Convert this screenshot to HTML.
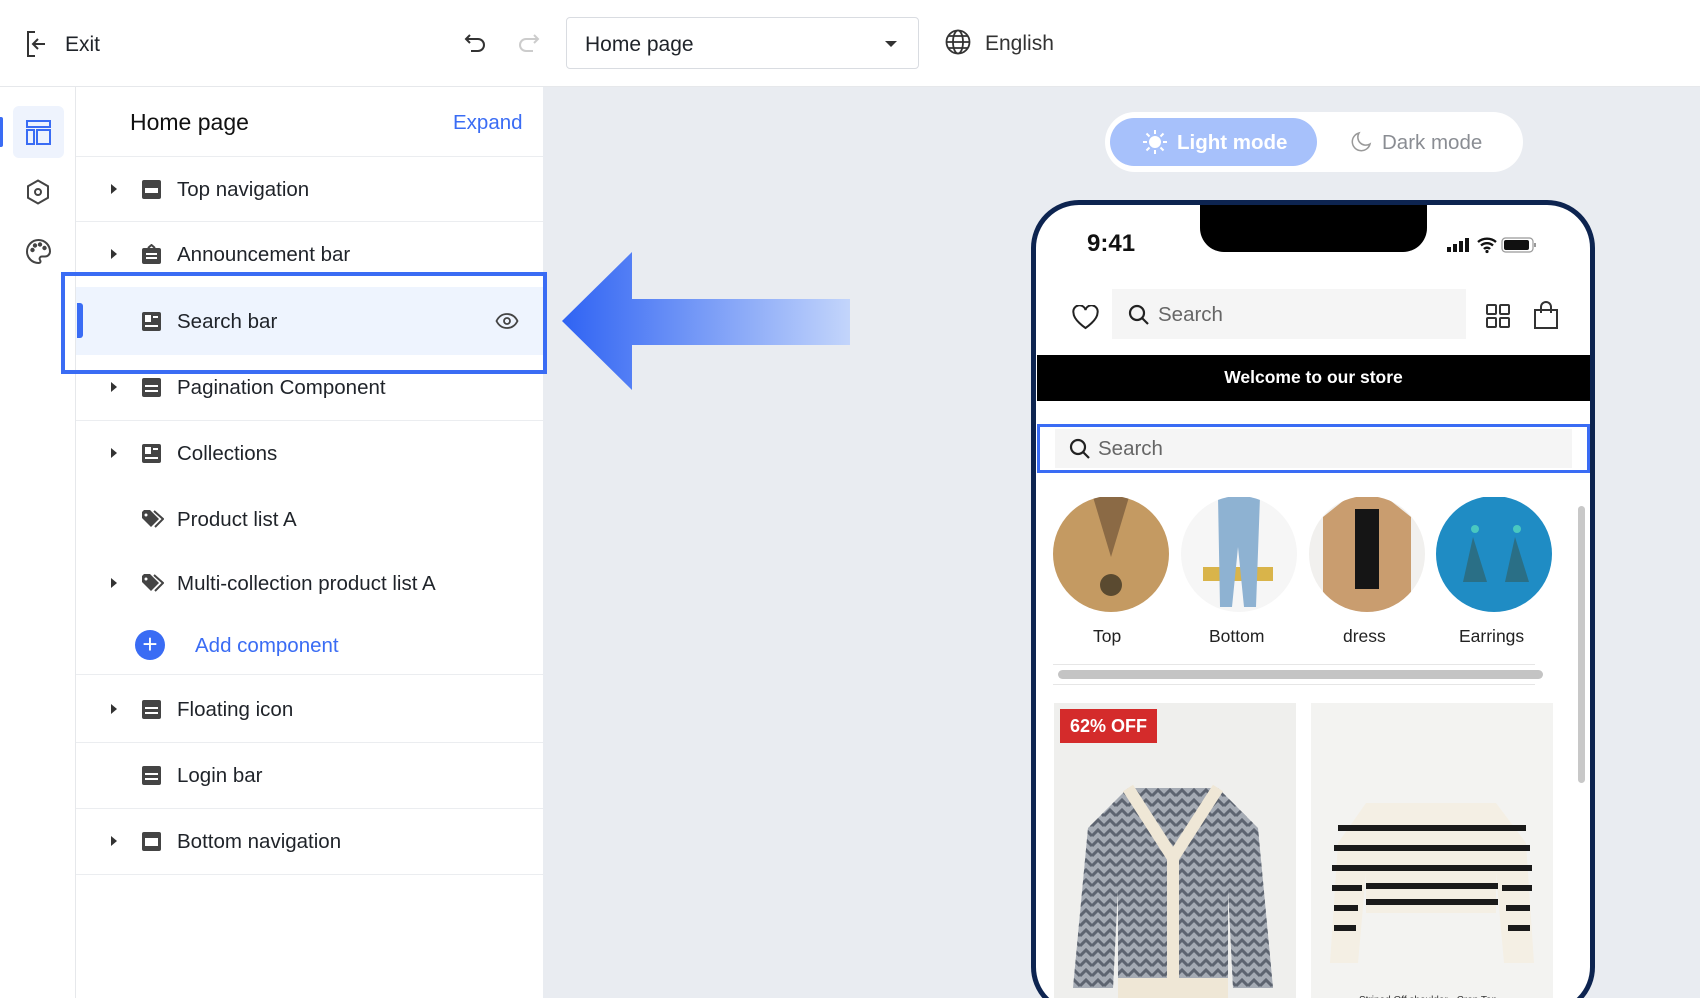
<!DOCTYPE html>
<html style="overflow:hidden;width:1700px;height:998px"><head><meta charset="utf-8">
<style>
*{margin:0;padding:0;box-sizing:border-box}
body{width:1700px;height:998px;overflow:hidden;background:#fff;font-family:"Liberation Sans",Arial,sans-serif;color:#1f2329;position:relative}
.abs{position:absolute}
.row{position:absolute;left:76px;width:467px;height:0}
.row .t{position:absolute;left:101px;top:-11px;font-size:20.5px;white-space:nowrap;color:#1f2329}
.row .tri{position:absolute;left:35px;top:-5px;width:0;height:0;border-left:6px solid #333;border-top:5px solid transparent;border-bottom:5px solid transparent}
.row svg{position:absolute;left:65px;top:-10px}
.div{position:absolute;left:76px;width:467px;height:1px;background:#ebedf0}
</style></head><body>
<!-- top bar -->
<div class="abs" style="left:0;top:86px;width:1700px;height:1px;background:#e6e8eb"></div>
<svg class="abs" style="left:25px;top:30px" width="26" height="28" viewBox="0 0 26 28" fill="none" stroke="#333" stroke-width="2"><path d="M10 2H3v24h7"/><path d="M20 14H8M13 9l-5 5 5 5"/></svg>
<div class="abs" style="left:65px;top:33px;font-size:21px">Exit</div>
<svg class="abs" style="left:464px;top:32px" width="24" height="22" viewBox="0 0 24 22" fill="none" stroke="#333" stroke-width="2"><path d="M6 3L2 7l4 4"/><path d="M2 7h12a6 6 0 010 12H7"/></svg>
<svg class="abs" style="left:516px;top:32px" width="24" height="22" viewBox="0 0 24 22" fill="none" stroke="#ccc" stroke-width="2"><path d="M18 3l4 4-4 4"/><path d="M22 7H10a6 6 0 000 12h7"/></svg>
<div class="abs" style="left:566px;top:17px;width:353px;height:52px;border:1px solid #d9dce1;border-radius:4px"></div>
<div class="abs" style="left:585px;top:33px;font-size:21px;color:#1f2329">Home page</div>
<div class="abs" style="left:885px;top:41px;border-top:6px solid #333;border-left:6px solid transparent;border-right:6px solid transparent"></div>
<svg class="abs" style="left:945px;top:29px" width="26" height="26" viewBox="0 0 26 26" fill="none" stroke="#333" stroke-width="1.8"><circle cx="13" cy="13" r="11.5"/><ellipse cx="13" cy="13" rx="5" ry="11.5"/><path d="M1.5 13h23M3.5 7h19M3.5 19h19"/></svg>
<div class="abs" style="left:985px;top:32px;font-size:21px;color:#333">English</div>

<!-- left rail -->
<div class="abs" style="left:75px;top:87px;width:1px;height:911px;background:#e6e8eb"></div>
<div class="abs" style="left:0;top:117px;width:3px;height:30px;background:#3a6cf4;border-radius:0 2px 2px 0"></div>
<div class="abs" style="left:13px;top:106px;width:51px;height:52px;background:#eef3fd;border-radius:6px"></div>
<svg class="abs" style="left:26px;top:120px" width="25" height="25" viewBox="0 0 25 25" fill="none" stroke="#3a6cf4" stroke-width="2"><rect x="1" y="1" width="23" height="6"/><rect x="1" y="10" width="7" height="14"/><rect x="11" y="10" width="13" height="14"/></svg>
<svg class="abs" style="left:26px;top:179px" width="24" height="26" viewBox="0 0 24 26" fill="none" stroke="#444" stroke-width="2"><path d="M12 1.5l10 5.75v11.5L12 24.5 2 18.75V7.25z"/><circle cx="12" cy="13" r="3"/></svg>
<svg class="abs" style="left:25px;top:238px" width="27" height="27" viewBox="0 0 27 27" fill="none" stroke="#444" stroke-width="2"><path d="M13.5 2A11.5 11.5 0 002 13.5 11.5 11.5 0 0013.5 25c2 0 2.5-1.5 1.5-3-1-1.5 0-3.5 2-3.5h3c2.5 0 5-2 5-5A11.5 11.5 0 0013.5 2z"/><circle cx="7.5" cy="12" r="1.2" fill="#444"/><circle cx="10" cy="7.5" r="1.2" fill="#444"/><circle cx="15" cy="6.5" r="1.2" fill="#444"/><circle cx="19.5" cy="10" r="1.2" fill="#444"/></svg>

<!-- panel -->
<div class="abs" style="left:543px;top:87px;width:1157px;height:911px;background:#e9ecf1"></div>
<div class="abs" style="left:130px;top:109px;font-size:23px;color:#111">Home page</div>
<div class="abs" style="left:453px;top:111px;font-size:20.5px;color:#3a6cf4">Expand</div>
<div class="div" style="top:156px"></div>
<div class="div" style="top:221px"></div>
<div class="abs" style="left:76px;top:287px;width:467px;height:68px;background:#eef4fe"></div>
<div class="abs" style="left:77px;top:303px;width:6px;height:35px;background:#3a6cf4;border-radius:0 3px 3px 0"></div>
<div class="div" style="top:420px"></div>
<div class="div" style="top:674px"></div>
<div class="div" style="top:742px"></div>
<div class="div" style="top:808px"></div>
<div class="div" style="top:874px"></div>

<div class="row" style="top:189px"><div class="tri"></div><svg width="21" height="21" viewBox="0 0 21 21"><rect x="1" y="1" width="19" height="19" rx="2" fill="#444"/><rect x="4" y="9" width="13" height="5" fill="#fff"/></svg><div class="t">Top navigation</div></div>
<div class="row" style="top:254px"><div class="tri"></div><svg width="21" height="21" viewBox="0 0 21 21"><rect x="1" y="4" width="19" height="16" rx="2" fill="#444"/><path d="M7 4l3.5-3 3.5 3" stroke="#444" stroke-width="2" fill="none"/><rect x="5" y="9" width="11" height="2" fill="#fff"/><rect x="5" y="13" width="11" height="2" fill="#fff"/></svg><div class="t">Announcement bar</div></div>
<div class="row" style="top:321px"><svg width="21" height="21" viewBox="0 0 21 21"><rect x="1" y="1" width="19" height="19" rx="2" fill="#444"/><rect x="4" y="4" width="6" height="7" fill="#fff"/><rect x="12" y="5" width="5" height="2" fill="#fff"/><rect x="4" y="14" width="13" height="2" fill="#fff"/></svg><div class="t">Search bar</div>
<svg style="left:419px;top:-9px" width="24" height="18" viewBox="0 0 24 18" fill="none" stroke="#444" stroke-width="1.8"><path d="M1.5 9C4 4 8 2 12 2s8 2 10.5 7c-2.5 5-6.5 7-10.5 7S4 14 1.5 9z"/><circle cx="12" cy="9" r="3"/></svg></div>
<div class="row" style="top:387px"><div class="tri"></div><svg width="21" height="21" viewBox="0 0 21 21"><rect x="1" y="1" width="19" height="19" rx="2" fill="#444"/><rect x="4" y="8" width="13" height="2" fill="#fff"/><rect x="4" y="13" width="13" height="2" fill="#fff"/></svg><div class="t">Pagination Component</div></div>
<div class="row" style="top:453px"><div class="tri"></div><svg width="21" height="21" viewBox="0 0 21 21"><rect x="1" y="1" width="19" height="19" rx="2" fill="#444"/><rect x="4" y="4" width="6" height="7" fill="#fff"/><rect x="12" y="5" width="5" height="2" fill="#fff"/><rect x="4" y="14" width="13" height="2" fill="#fff"/></svg><div class="t">Collections</div></div>
<div class="row" style="top:519px"><svg width="23" height="21" viewBox="0 0 23 21"><path d="M1 3v6l9 9 8-8-9-9H3z" fill="#444"/><path d="M13 2l9 8-8 8" stroke="#444" stroke-width="2" fill="none"/><circle cx="5" cy="6" r="1.5" fill="#fff"/></svg><div class="t">Product list A</div></div>
<div class="row" style="top:583px"><div class="tri"></div><svg width="23" height="21" viewBox="0 0 23 21"><path d="M1 3v6l9 9 8-8-9-9H3z" fill="#444"/><path d="M13 2l9 8-8 8" stroke="#444" stroke-width="2" fill="none"/><circle cx="5" cy="6" r="1.5" fill="#fff"/></svg><div class="t">Multi-collection product list A</div></div>
<div class="abs" style="left:135px;top:630px;width:30px;height:30px;border-radius:50%;background:#3a6cf4;color:#fff;font-size:26px;line-height:28px;text-align:center">+</div>
<div class="abs" style="left:195px;top:634px;font-size:20.5px;color:#3a6cf4">Add component</div>
<div class="row" style="top:709px"><div class="tri"></div><svg width="21" height="21" viewBox="0 0 21 21"><rect x="1" y="1" width="19" height="19" rx="2" fill="#444"/><rect x="4" y="8" width="13" height="2" fill="#fff"/><rect x="4" y="13" width="13" height="2" fill="#fff"/></svg><div class="t">Floating icon</div></div>
<div class="row" style="top:775px"><svg width="21" height="21" viewBox="0 0 21 21"><rect x="1" y="1" width="19" height="19" rx="2" fill="#444"/><rect x="4" y="8" width="13" height="2" fill="#fff"/><rect x="4" y="13" width="13" height="2" fill="#fff"/></svg><div class="t">Login bar</div></div>
<div class="row" style="top:841px"><div class="tri"></div><svg width="21" height="21" viewBox="0 0 21 21"><rect x="1" y="1" width="19" height="19" rx="2" fill="#444"/><rect x="4" y="7" width="13" height="8" fill="#fff"/></svg><div class="t">Bottom navigation</div></div>

<!-- highlight box -->
<div class="abs" style="left:61px;top:272px;width:486px;height:102px;border:4px solid #3a6cf4"></div>

<!-- arrow -->
<svg class="abs" style="left:560px;top:250px" width="292" height="142" viewBox="0 0 292 142"><defs><linearGradient id="g" x1="0" x2="1"><stop offset="0" stop-color="#2f63f3"/><stop offset="1" stop-color="#c3d5fb"/></linearGradient></defs><path d="M2 71L72 2v47h218v46H72v45z" fill="url(#g)"/></svg>

<!-- mode toggle -->
<div class="abs" style="left:1105px;top:112px;width:418px;height:60px;border-radius:30px;background:#fff"></div>
<div class="abs" style="left:1110px;top:118px;width:207px;height:48px;border-radius:24px;background:#a7c1fb"></div>
<svg class="abs" style="left:1142px;top:129px" width="26" height="26" viewBox="0 0 26 26" stroke="#fff" stroke-width="2"><circle cx="13" cy="13" r="5" fill="#fff"/><path d="M13 1v4M13 21v4M1 13h4M21 13h4M4.5 4.5l3 3M18.5 18.5l3 3M4.5 21.5l3-3M18.5 7.5l3-3"/></svg>
<div class="abs" style="left:1177px;top:131px;font-size:20.5px;color:#fff;font-weight:bold">Light mode</div>
<svg class="abs" style="left:1350px;top:131px" width="22" height="22" viewBox="0 0 22 22" fill="none" stroke="#999" stroke-width="1.5"><path d="M9 2a9 9 0 1011 11A8 8 0 019 2z"/></svg>
<div class="abs" style="left:1382px;top:131px;font-size:20.5px;color:#8a8d93">Dark mode</div>

<!-- phone -->
<div class="abs" style="left:1031px;top:200px;width:564px;height:815px;border:5px solid #0d2450;border-radius:48px;background:#fff;overflow:hidden">
 <div class="abs" style="left:164px;top:-5px;width:227px;height:52px;background:#000;border-radius:0 0 24px 24px"></div>
 <div class="abs" style="left:51px;top:25px;font-size:24px;font-weight:bold;color:#111">9:41</div>
 <svg class="abs" style="left:411px;top:31px" width="90" height="18" viewBox="0 0 90 18"><rect x="0" y="11" width="4" height="5" fill="#111"/><rect x="6" y="8" width="4" height="8" fill="#111"/><rect x="12" y="5" width="4" height="11" fill="#111"/><rect x="18" y="2" width="4" height="14" fill="#111"/><path d="M31 6a14 14 0 0118 0M34 9.5a9 9 0 0112 0M37 13a4 4 0 016 0" stroke="#111" stroke-width="2.4" fill="none"/><circle cx="40" cy="15.5" r="1.6" fill="#111"/><rect x="55" y="2" width="31" height="14" rx="3.5" stroke="#999" stroke-width="1.2" fill="none"/><rect x="57" y="4" width="25" height="10" rx="2" fill="#111"/><rect x="87" y="7" width="2" height="4" fill="#999"/></svg>
 <svg class="abs" style="left:36px;top:100px" width="27" height="25" viewBox="0 0 27 25" fill="none" stroke="#222" stroke-width="2"><path d="M13.5 23S1.5 15 1.5 8A6 6 0 0113.5 5a6 6 0 0112 3c0 7-12 15-12 15z"/></svg>
 <div class="abs" style="left:76px;top:84px;width:354px;height:50px;background:#f5f5f5"></div>
 <svg class="abs" style="left:92px;top:99px" width="22" height="22" viewBox="0 0 22 22" fill="none" stroke="#222" stroke-width="2.2"><circle cx="9" cy="9" r="7"/><path d="M14 14l6 6"/></svg>
 <div class="abs" style="left:122px;top:98px;font-size:20.5px;color:#666">Search</div>
 <svg class="abs" style="left:450px;top:99px" width="24" height="24" viewBox="0 0 24 24" fill="none" stroke="#333" stroke-width="2"><rect x="1" y="1" width="9" height="9" rx="1"/><rect x="14" y="1" width="9" height="9" rx="1"/><rect x="1" y="14" width="9" height="9" rx="1"/><rect x="14" y="14" width="9" height="9" rx="1"/></svg>
 <svg class="abs" style="left:497px;top:96px" width="26" height="28" viewBox="0 0 26 28" fill="none" stroke="#333" stroke-width="2"><path d="M2 9h22v18H2z"/><path d="M8 12V6a5 5 0 0110 0v6"/></svg>
 <div class="abs" style="left:1px;top:150px;width:553px;height:46px;background:#000;color:#fff;font-size:17.5px;text-align:center;line-height:44px;font-weight:bold">Welcome to our store</div>
 <div class="abs" style="left:1px;top:219px;width:553px;height:49px;border:3px solid #3a6cf4;background:#fff"></div>
 <div class="abs" style="left:19px;top:224px;width:517px;height:39px;background:#f5f5f5"></div>
 <svg class="abs" style="left:33px;top:233px" width="22" height="22" viewBox="0 0 22 22" fill="none" stroke="#222" stroke-width="2.2"><circle cx="9" cy="9" r="7"/><path d="M14 14l6 6"/></svg>
 <div class="abs" style="left:62px;top:232px;font-size:20.5px;color:#666">Search</div>
 <!-- categories -->
 <svg class="abs" style="left:17px;top:292px" width="520" height="125" viewBox="0 0 520 125">
  <defs><clipPath id="c1"><circle cx="58" cy="57" r="58"/></clipPath><clipPath id="c2"><circle cx="186" cy="57" r="58"/></clipPath><clipPath id="c3"><circle cx="314" cy="57" r="58"/></clipPath><clipPath id="c4"><circle cx="441" cy="57" r="58"/></clipPath></defs>
  <circle cx="58" cy="57" r="58" fill="#c49a62"/><g clip-path="url(#c1)"><path d="M40 0l18 60 18-60z" fill="#8b6a45"/><circle cx="58" cy="88" r="11" fill="#5a4a30"/></g>
  <circle cx="186" cy="57" r="58" fill="#f6f6f6"/><g clip-path="url(#c2)"><rect x="150" y="70" width="70" height="14" fill="#d9b44a"/><path d="M165 0h42l-4 110h-12l-6-60-6 60h-12z" fill="#8eb2d2"/></g>
  <circle cx="314" cy="57" r="58" fill="#f1f0ee"/><g clip-path="url(#c3)"><path d="M270 20l25-20h38l25 20v100h-88z" fill="#c99d6f"/><rect x="302" y="12" width="24" height="80" fill="#151515"/></g>
  <circle cx="441" cy="57" r="58" fill="#1f8cc4"/><g clip-path="url(#c4)"><path d="M420 40l-10 45h24zM462 40l-10 45h24z" fill="#2a6f86"/><circle cx="422" cy="32" r="4" fill="#49c8c0"/><circle cx="464" cy="32" r="4" fill="#49c8c0"/></g>
 </svg>
 <div class="abs" style="left:17px;top:421px;width:520px;font-size:17.5px;color:#222">
  <span class="abs" style="left:40px">Top</span><span class="abs" style="left:156px">Bottom</span><span class="abs" style="left:290px">dress</span><span class="abs" style="left:406px">Earrings</span></div>
 <div class="abs" style="left:17px;top:459px;width:482px;height:1px;background:#e6e6e6"></div>
 <div class="abs" style="left:22px;top:465px;width:485px;height:9px;border-radius:5px;background:#c4c4c4"></div>
 <div class="abs" style="left:17px;top:479px;width:482px;height:1px;background:#e6e6e6"></div>
 <div class="abs" style="left:542px;top:301px;width:7px;height:277px;border-radius:4px;background:#c8c8c8"></div>
 <!-- products -->
 <div class="abs" style="left:18px;top:498px;width:242px;height:320px;background:#efefed">
  <div class="abs" style="left:6px;top:6px;width:97px;height:34px;background:#d42b2b;color:#fff;font-weight:bold;font-size:18px;line-height:34px;text-align:center">62% OFF</div>
  <svg class="abs" style="left:14px;top:75px" width="210" height="230" viewBox="0 0 210 230"><defs><pattern id="hb" width="12" height="10" patternUnits="userSpaceOnUse"><path d="M0 8l6-6 6 6" stroke="#5d6470" stroke-width="3" fill="none"/></pattern></defs><path d="M60 10h90l40 40 15 160h-40l-5-100v110H50V110l-5 100H5L20 50z" fill="#a5abb4"/><path d="M60 10h90l40 40 15 160h-40l-5-100v110H50V110l-5 100H5L20 50z" fill="url(#hb)"/><path d="M60 10l45 70 45-70M105 80v140" stroke="#efe7d6" stroke-width="12" fill="none"/><rect x="50" y="200" width="110" height="20" fill="#efe7d6"/></svg>
 </div>
 <div class="abs" style="left:275px;top:498px;width:242px;height:320px;background:#f3f3f1">
  <svg class="abs" style="left:15px;top:95px" width="212" height="170" viewBox="0 0 212 170"><path d="M40 5h130l30 40 8 120h-30l-8-90v40H40V75l-8 90H4l8-120z" fill="#f4efe4"/><g stroke="#1a1a1a" stroke-width="6"><path d="M12 30h188M8 50h196M6 70h200M6 90h30M176 90h30M8 110h24M180 110h24M8 130h22M182 130h22"/><path d="M40 88h132M40 104h132"/></g></svg>
  <div class="abs" style="left:48px;top:292px;font-size:10px;color:#333">Striped Off shoulder · Crop Top</div>
 </div>
</div>
</body></html>
